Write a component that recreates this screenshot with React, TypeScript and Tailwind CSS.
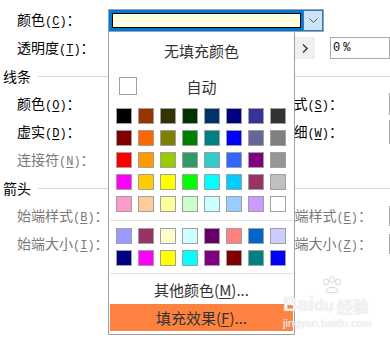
import type { ReactNode } from "react";

const PALETTE = [
  ["#000000", "#993300", "#333300", "#003300", "#003366", "#000080", "#333399", "#333333"],
  ["#800000", "#ff6600", "#808000", "#008000", "#008080", "#0000ff", "#666699", "#808080"],
  ["#ff0000", "#ff9900", "#99cc00", "#339966", "#33cccc", "#3366ff", "#800080", "#969696"],
  ["#ff00ff", "#ffcc00", "#ffff00", "#00ff00", "#00ffff", "#00ccff", "#993366", "#c0c0c0"],
  ["#ff99cc", "#ffcc99", "#ffff99", "#ccffcc", "#ccffff", "#99ccff", "#cc99ff", "#ffffff"],
];

const RECENT = [
  ["#9999ff", "#993366", "#ffffcc", "#ccffff", "#660066", "#ff8080", "#0066cc", "#ccccff"],
  ["#000080", "#ff00ff", "#ffff00", "#00ffff", "#800080", "#800000", "#008080", "#0000ff"],
];

function Label({ text, k, grey }: { text: string; k: string; grey?: boolean }) {
  return (
    <span className={grey ? "text-[#7a7a7a]" : "text-black"}>
      {text}
      <span className="font-['Liberation_Mono',monospace] text-[12px]">
        (<span className="underline underline-offset-2">{k}</span>)
      </span>
      ：
    </span>
  );
}

function Row({ children }: { children: ReactNode }) {
  return <div className="flex h-[28px] shrink-0 items-center">{children}</div>;
}

function Section({ title }: { title: string }) {
  return (
    <Row>
      <span className="pl-[3px] text-black">{title}</span>
      <div className="ml-[7px] h-px flex-1 bg-[#dadada]" />
    </Row>
  );
}

function Swatches({ rows }: { rows: string[][] }) {
  return (
    <div className="ml-[7px] grid w-[170px] grid-cols-8 gap-[6px]">
      {rows.flat().map((c, i) => (
        <div
          key={i}
          className="h-[16px] w-[16px] border border-[#a0a0a0]"
          style={{ backgroundColor: c }}
        />
      ))}
    </div>
  );
}

export default function App() {
  return (
    <div className="relative h-[339px] w-[390px] overflow-hidden bg-white font-['Noto_Sans_CJK_SC',sans-serif] text-[14px] leading-none">
      {/* dialog behind the popup */}
      <div className="flex flex-col pt-[6px]">
        <Row>
          <div className="w-[108px] pl-[17px]">
            <Label text="颜色" k="C" />
          </div>
          <div className="flex h-[23px] w-[216px] border border-[#a0a0a0]">
            <div className="flex-1 bg-[#0078d7] p-[3px] pr-[2px]">
              <div className="h-full border border-black bg-[#ffffe1]" />
            </div>
            <div className="flex w-[20px] items-center justify-center border border-[#2e7bc4] bg-[#cce4f7]">
              <svg width="9" height="5" viewBox="0 0 9 5">
                <path d="M0.5 0.5 L4.5 4.5 L8.5 0.5" fill="none" stroke="#5a5a5a" strokeWidth="1" />
              </svg>
            </div>
          </div>
        </Row>
        <Row>
          <div className="w-[108px] pl-[17px]">
            <Label text="透明度" k="T" />
          </div>
          <div className="flex w-[216px] justify-end">
            <div className="flex h-[22px] w-[29px] items-center justify-end bg-[#f0f0f0] pr-[7px]">
              <svg width="6" height="9" viewBox="0 0 6 9">
                <path d="M1 0.5 L5 4.5 L1 8.5" fill="none" stroke="#4a4a4a" strokeWidth="1.6" />
              </svg>
            </div>
          </div>
          <div className="ml-[15px] flex h-[22px] w-[60px] shrink-0 items-center border border-[#ababab] pl-[2px] font-['Liberation_Mono',monospace] text-[12px] text-black">
            <span>0</span>
            <span className="ml-[3px]">%</span>
          </div>
        </Row>
        <Section title="线条" />
        <Row>
          <div className="w-[250px] shrink-0 pl-[17px]">
            <Label text="颜色" k="O" />
          </div>
          <div className="flex w-[93px] shrink-0 justify-end">
            <Label text="样式" k="S" />
          </div>
          <div className="ml-[46px] h-[22px] w-[40px] shrink-0 border border-[#ababab]" />
        </Row>
        <Row>
          <div className="w-[250px] shrink-0 pl-[17px]">
            <Label text="虚实" k="D" />
          </div>
          <div className="flex w-[93px] shrink-0 justify-end">
            <Label text="粗细" k="W" />
          </div>
          <div className="ml-[46px] h-[24px] w-[40px] shrink-0 border border-[#ababab]" />
        </Row>
        <Row>
          <div className="pl-[17px]">
            <Label text="连接符" k="N" grey />
          </div>
        </Row>
        <Section title="箭头" />
        <Row>
          <div className="w-[270px] shrink-0 pl-[17px]">
            <Label text="始端样式" k="B" grey />
          </div>
          <div className="flex w-[102px] shrink-0 justify-end">
            <Label text="末端样式" k="E" grey />
          </div>
          <div className="ml-[17px] h-[20px] w-[40px] shrink-0 border border-[#ababab]" />
        </Row>
        <Row>
          <div className="w-[270px] shrink-0 pl-[17px]">
            <Label text="始端大小" k="I" grey />
          </div>
          <div className="flex w-[102px] shrink-0 justify-end">
            <Label text="末端大小" k="Z" grey />
          </div>
          <div className="ml-[17px] h-[20px] w-[40px] shrink-0 border border-[#ababab]" />
        </Row>
      </div>

      {/* colour popup */}
      <div className="absolute left-[108px] top-[31px] flex h-[304px] w-[187px] flex-col border border-[#a0a0a0] bg-white text-[#333]">
        <div className="flex h-[36px] items-center justify-center text-[15px]">无填充颜色</div>
        <div className="flex h-[36px] items-center pl-[10px] pr-[28px]">
          <div className="h-[18px] w-[18px] border border-[#a0a0a0] bg-white" />
          <div className="flex-1 text-center text-[15px]">自动</div>
        </div>
        <div className="mt-[4px]">
          <Swatches rows={PALETTE} />
        </div>
        <div className="mx-[1px] mt-[8px] h-px bg-[#e3e3e3]" />
        <div className="mt-[7px]">
          <Swatches rows={RECENT} />
        </div>
        <div className="mx-[1px] mt-[7px] h-px bg-[#e3e3e3]" />
        <div className="flex h-[30px] items-center justify-center text-[15px]">
          其他颜色(<span className="underline underline-offset-2">M</span>)...
        </div>
        <div className="mx-[1px] flex h-[27px] items-center justify-center bg-[#fe8340] text-[15px]">
          填充效果(<span className="underline underline-offset-2">F</span>)...
        </div>
      </div>

      {/* watermark */}
      <div className="pointer-events-none absolute left-[283px] top-[276px] flex flex-col text-white/80 [text-shadow:0_0_1px_#c4c4c4]">
        <div className="ml-[38px] flex h-[18px] items-end">
          <svg width="22" height="18" viewBox="0 0 22 18" fill="none" stroke="#d6d6d6" strokeWidth="1">
            <ellipse cx="5" cy="6" rx="2.5" ry="3.2" />
            <ellipse cx="11" cy="3.5" rx="2.5" ry="3" />
            <ellipse cx="17" cy="6" rx="2.5" ry="3.2" />
            <path d="M5 15 C6 10, 16 10, 17 15 C17 17.5, 5 17.5, 5 15 Z" />
          </svg>
        </div>
        <div className="flex items-end font-['Liberation_Sans',sans-serif] text-[20px] font-bold leading-none">
          Bai<span className="text-[16px]">du</span>
          <span className="ml-[3px] font-['Noto_Sans_CJK_SC',sans-serif] text-[16px]">经验</span>
        </div>
        <div className="mt-[4px] font-['Liberation_Sans',sans-serif] text-[11px] leading-none">jingyan.baidu.com</div>
      </div>
    </div>
  );
}
